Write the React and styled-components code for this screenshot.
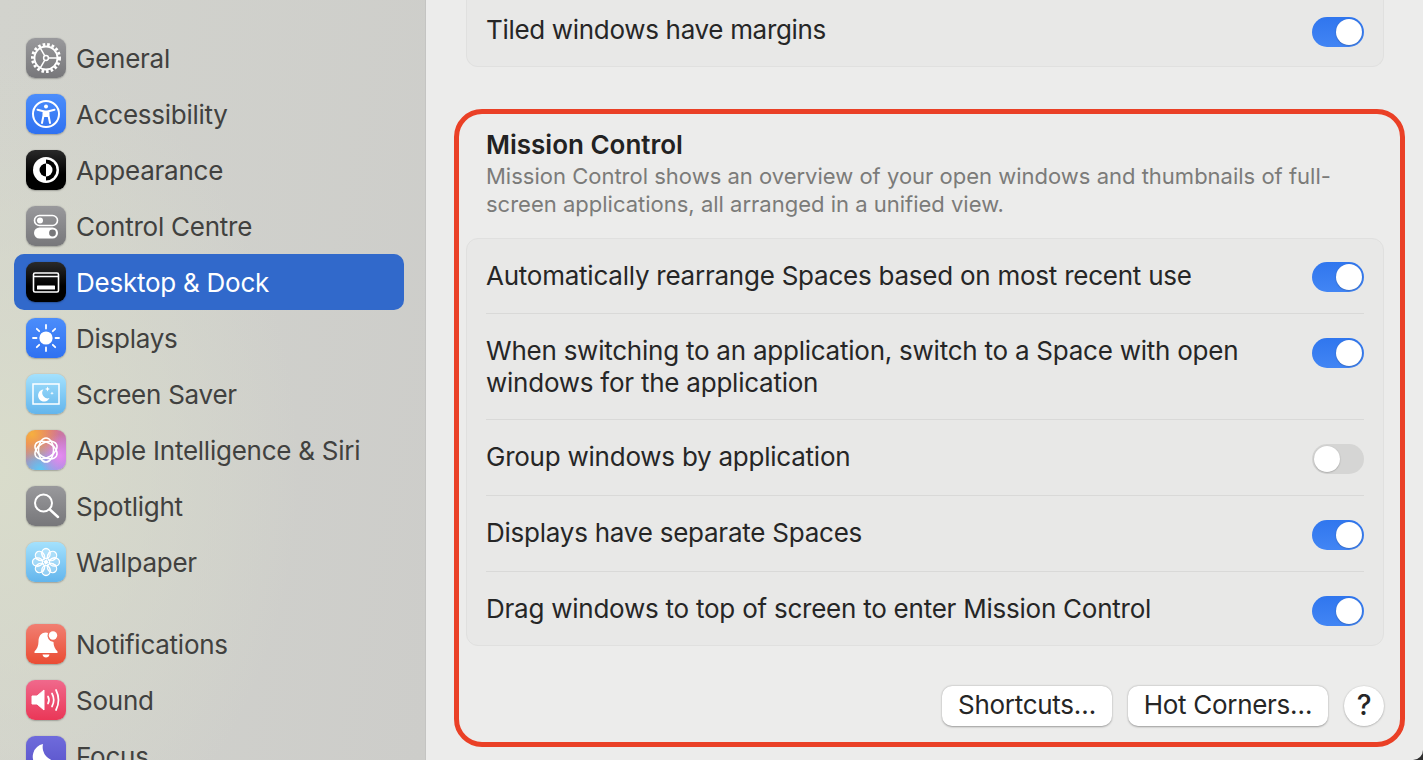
import React from "react";
import styled, { createGlobalStyle } from "styled-components";

const GlobalStyle = createGlobalStyle`
  html, body {
    margin: 0;
    padding: 0;
    height: 100%;
    overflow: hidden;
    background: #2e2e2e;
    font-family: "Inter", "Liberation Sans", sans-serif;
    -webkit-font-smoothing: antialiased;
  }
  #root { height: 100%; }
`;

/* PAGE */

const Window = styled.div`
  display: flex;
  width: 1423px;
  height: 760px;
  overflow: hidden;
  border-bottom-right-radius: 10px;
  background: #ececeb;
`;

const Sidebar = styled.nav`
  flex: 0 0 426px;
  box-sizing: border-box;
  height: 760px;
  padding: 30px 21px 0 14px;
  overflow: hidden;
  border-right: 1px solid #c4c4c2;
  background:
    radial-gradient(ellipse 300px 420px at 0px 470px, #d9dccb 0%, rgba(217, 220, 203, 0) 100%),
    linear-gradient(100deg, #d2d3cd 0%, #cdcdca 100%);
`;

const NavGroup = styled.div`
  display: flex;
  flex-direction: column;
  margin-bottom: 26px;
`;

const NavRow = styled.div`
  display: flex;
  align-items: center;
  flex: 0 0 56px;
  height: 56px;
  padding-left: 12px;
  border-radius: 10px;
  gap: 10px;
  font-size: 26px;
  letter-spacing: -0.25px;
  color: ${(p) => (p.$active ? "#ffffff" : "#41413f")};
  background: ${(p) => (p.$active ? "#3169cb" : "transparent")};
`;

const Tile = styled.span`
  display: block;
  width: 40px;
  height: 40px;
  flex: 0 0 40px;
  border-radius: 9px;
  overflow: hidden;
  background: ${(p) => p.$bg};
  box-shadow: 0 0.5px 1.5px rgba(0, 0, 0, 0.25);
  svg { display: block; width: 40px; height: 40px; }
`;

const Content = styled.main`
  flex: 1;
  display: flex;
  flex-direction: column;
  box-sizing: border-box;
  padding: 0 18px 0 28px;
`;

const Label = styled.span`
  max-width: 770px;
  margin-bottom: 1px;
  font-size: 26px;
  line-height: 32px;
  letter-spacing: -0.24px;
  color: #262626;
`;

const TopCard = styled.div`
  display: flex;
  align-items: center;
  justify-content: space-between;
  box-sizing: border-box;
  height: 67px;
  margin: 0 21px 42px 12px;
  padding: 0 19px 4px 19px;
  background: #e8e8e7;
  border: 1px solid #e0e0df;
  border-top: 0;
  border-radius: 0 0 12px 12px;
  ${Label} {
    margin-bottom: 3px;
    letter-spacing: -0.32px;
  }
`;

const Highlight = styled.section`
  display: flex;
  flex-direction: column;
  box-sizing: border-box;
  height: 638px;
  padding: 16px 16px 0 7px;
  border: 5px solid #ea4026;
  border-radius: 28px;
`;

const Heading = styled.div`
  padding-left: 20px;
`;

const Title = styled.h2`
  margin: 0 0 2px;
  font-size: 26px;
  line-height: 30px;
  font-weight: 600;
  color: #222222;
`;

const Description = styled.p`
  margin: 0;
  font-size: 22px;
  line-height: 28px;
  color: #7b7b79;
`;

const Card = styled.div`
  display: flex;
  flex-direction: column;
  box-sizing: border-box;
  height: 408px;
  margin-top: 20px;
  padding: 0 19px;
  background: #e8e8e7;
  border: 1px solid #e0e0df;
  border-radius: 12px;
`;

const Row = styled.div`
  display: flex;
  flex: 0 0 auto;
  justify-content: space-between;
  align-items: ${(p) => (p.$tall ? "flex-start" : "center")};
  box-sizing: border-box;
  height: ${(p) => p.$height}px;
  padding-top: ${(p) => (p.$tall ? "21px" : "0")};
  border-bottom: ${(p) => (p.$last ? "0" : "1px solid #d9d9d8")};
`;

const Toggle = styled.span`
  position: relative;
  display: block;
  flex: 0 0 52px;
  width: 52px;
  height: 30px;
  margin-top: ${(p) => (p.$raised ? "3px" : "2px")};
  border-radius: 15px;
  background: ${(p) => (p.$on ? "linear-gradient(180deg, #3076ee 0%, #4285f4 100%)" : "#d5d5d4")};
  &::after {
    content: "";
    position: absolute;
    top: 2px;
    left: ${(p) => (p.$on ? "24px" : "2px")};
    width: 26px;
    height: 26px;
    border-radius: 50%;
    background: #ffffff;
    box-shadow: 0 0.5px 1.5px rgba(0, 0, 0, 0.3);
  }
`;

const Footer = styled.div`
  display: flex;
  justify-content: flex-end;
  gap: 16px;
  margin-top: 40px;
`;

const Button = styled.button`
  box-sizing: border-box;
  height: 40px;
  width: ${(p) => p.$width}px;
  padding: 0 0 3px;
  border: 0;
  border-radius: 10px;
  background: #ffffff;
  box-shadow: 0 0.5px 2px rgba(0, 0, 0, 0.35);
  font-family: inherit;
  font-size: 26px;
  letter-spacing: -0.3px;
  color: #262626;
`;

const HelpButton = styled(Button)`
  border-radius: 50%;
  font-size: 28px;
  font-weight: 500;
`;

/* ICONS */

const W = { stroke: "#fff", fill: "none" };

const GeneralIcon = () => (
  <svg viewBox="0 0 40 40">
    <circle cx="20" cy="20" r="13.5" {...W} strokeWidth="3" strokeDasharray="2.6 2" />
    <circle cx="20" cy="20" r="11.5" {...W} strokeWidth="1.8" />
    <circle cx="20" cy="20" r="2.4" {...W} strokeWidth="1.5" />
    <path d="M22.4 20H31M18.8 17.9L14.6 10.6M18.8 22.1L14.6 29.4" {...W} strokeWidth="1.5" />
  </svg>
);

const AccessibilityIcon = () => (
  <svg viewBox="0 0 40 40">
    <circle cx="20" cy="20" r="13" {...W} strokeWidth="2" />
    <circle cx="20" cy="12.5" r="2" fill="#fff" />
    <path d="M11.5 15.8L17.5 17.2V21.5L16 29M28.5 15.8L22.5 17.2V21.5L24 29M18 22H22" {...W} strokeWidth="2" strokeLinecap="round" strokeLinejoin="round" />
    <rect x="17.5" y="16.5" width="5" height="6" fill="#fff" />
  </svg>
);

const AppearanceIcon = () => (
  <svg viewBox="0 0 40 40">
    <circle cx="20" cy="20" r="13" fill="#fff" />
    <path d="M20 9.5A10.5 10.5 0 0 1 20 30.5Z" fill="#000" />
    <path d="M20 13.5A6.5 6.5 0 0 0 20 26.5Z" fill="#000" />
    <path d="M20 13.5A6.5 6.5 0 0 1 20 26.5Z" fill="#fff" />
  </svg>
);

const ControlCentreIcon = () => (
  <svg viewBox="0 0 40 40">
    <rect x="8.5" y="9.5" width="23" height="10" rx="5" {...W} strokeWidth="1.6" />
    <circle cx="14" cy="14.5" r="3" fill="#fff" />
    <rect x="8" y="21.5" width="24" height="11" rx="5.5" fill="#fff" />
    <circle cx="26.5" cy="27" r="3.4" fill="#77777a" />
  </svg>
);

const DesktopIcon = () => (
  <svg viewBox="0 0 40 40">
    <rect x="7.5" y="11" width="25" height="19" rx="1.5" {...W} strokeWidth="1.6" />
    <path d="M7.5 14.5H32.5" {...W} strokeWidth="1.4" />
    <rect x="11" y="23.5" width="18" height="4" rx="0.6" fill="#fff" />
  </svg>
);

const DisplaysIcon = () => (
  <svg viewBox="0 0 40 40">
    <circle cx="20" cy="20" r="6.6" fill="#fff" />
    <path d="M20 7V10.5M20 29.5V33M7 20H10.5M29.5 20H33M10.8 10.8L13.2 13.2M26.8 26.8L29.2 29.2M10.8 29.2L13.2 26.8M26.8 13.2L29.2 10.8" {...W} strokeWidth="1.8" strokeLinecap="round" />
  </svg>
);

const ScreenSaverIcon = () => (
  <svg viewBox="0 0 40 40">
    <rect x="7" y="10" width="26" height="20" {...W} strokeWidth="1.5" />
    <path d="M17.5 15.5A6 6 0 1 0 23.5 24A5.4 5.4 0 0 1 17.5 15.5Z" fill="#fff" />
    <path d="M21.5 12.5L22.2 14.3L24 15L22.2 15.7L21.5 17.5L20.8 15.7L19 15L20.8 14.3ZM26 17.5L26.5 18.8L27.8 19.3L26.5 19.8L26 21L25.5 19.8L24.2 19.3L25.5 18.8Z" fill="#fff" />
  </svg>
);

const SiriIcon = () => (
  <svg viewBox="0 0 40 40">
    {[0, 60, 120].map((a) => (
      <ellipse key={a} cx="20" cy="20" rx="7.5" ry="12" {...W} strokeWidth="1.5" transform={`rotate(${a} 20 20)`} />
    ))}
  </svg>
);

const SpotlightIcon = () => (
  <svg viewBox="0 0 40 40">
    <circle cx="17.5" cy="17" r="8.5" {...W} strokeWidth="2" />
    <path d="M23.8 23.5L32 31" {...W} strokeWidth="2.4" strokeLinecap="round" />
  </svg>
);

const WallpaperIcon = () => (
  <svg viewBox="0 0 40 40">
    {[0, 45, 90, 135, 180, 225, 270, 315].map((a) => (
      <g key={a} transform={`rotate(${a} 20 20)`}>
        <ellipse cx="20" cy="11.5" rx="4.2" ry="5" fill="rgba(255,255,255,0.25)" stroke="#fff" strokeWidth="1.3" />
        <path d="M20 20L23 10" {...W} strokeWidth="0.8" />
      </g>
    ))}
    <circle cx="20" cy="20" r="2" fill="#fff" />
  </svg>
);

const NotificationsIcon = () => (
  <svg viewBox="0 0 40 40">
    <path d="M20 8.5C14.5 8.5 12.5 13 12.5 17.5C12.5 22 11 25 8.5 27.5V29H31.5V27.5C29 25 27.5 22 27.5 18A6.5 6.5 0 0 1 22 9Z" fill="#fff" />
    <path d="M16.5 30.5H23.5C23.2 32.5 21.8 33.5 20 33.5C18.2 33.5 16.8 32.5 16.5 30.5Z" fill="#fff" />
    <circle cx="27" cy="11.5" r="4.2" fill="#fff" />
  </svg>
);

const SoundIcon = () => (
  <svg viewBox="0 0 40 40">
    <path d="M6 16H11L18 10V30L11 24H6Z" fill="#fff" strokeLinejoin="round" stroke="#fff" strokeWidth="1" />
    <path d="M22 16.5Q24 20 22 23.5M26 13.5Q29.5 20 26 26.5M30 10Q35 20 30 30" {...W} strokeWidth="1.7" strokeLinecap="round" />
  </svg>
);

const FocusIcon = () => (
  <svg viewBox="0 0 40 40">
    <path d="M17 8A13 13 0 1 0 32 25A14 14 0 0 1 17 8Z" fill="#fff" />
  </svg>
);

const grey = "linear-gradient(180deg, #99999c 0%, #77777a 100%)";
const blue = "linear-gradient(180deg, #4b8dfb 0%, #2f71f1 100%)";
const sky = "linear-gradient(180deg, #a4e1fd 0%, #63b5ec 100%)";
const black = "linear-gradient(180deg, #2a2a2a 0%, #000000 60%)";

const navTop = [
  { name: "General", bg: grey, Icon: GeneralIcon },
  { name: "Accessibility", bg: blue, Icon: AccessibilityIcon },
  { name: "Appearance", bg: black, Icon: AppearanceIcon },
  { name: "Control Centre", bg: grey, Icon: ControlCentreIcon },
  { name: "Desktop & Dock", bg: black, Icon: DesktopIcon, active: true },
  { name: "Displays", bg: blue, Icon: DisplaysIcon },
  { name: "Screen Saver", bg: sky, Icon: ScreenSaverIcon },
  {
    name: "Apple Intelligence & Siri",
    bg: "radial-gradient(circle at 15% 10%, #f6b03f 0%, rgba(246,176,63,0) 55%), radial-gradient(circle at 85% 65%, #e58af0 0%, rgba(229,138,240,0) 50%), radial-gradient(circle at 35% 100%, #5cc8f5 0%, rgba(92,200,245,0) 60%), linear-gradient(135deg, #ef6a5e, #a583e8)",
    Icon: SiriIcon,
  },
  { name: "Spotlight", bg: grey, Icon: SpotlightIcon },
  { name: "Wallpaper", bg: sky, Icon: WallpaperIcon },
];

const navBottom = [
  { name: "Notifications", bg: "linear-gradient(180deg, #f17f72 0%, #ea4c33 100%)", Icon: NotificationsIcon },
  { name: "Sound", bg: "linear-gradient(180deg, #f0698c 0%, #ea3757 100%)", Icon: SoundIcon },
  { name: "Focus", bg: "linear-gradient(180deg, #6f6bdc 0%, #5650c8 100%)", Icon: FocusIcon },
];

const rows = [
  { text: "Automatically rearrange Spaces based on most recent use", height: 75, on: true },
  { text: "When switching to an application, switch to a Space with open windows for the application", height: 106, on: true, tall: true },
  { text: "Group windows by application", height: 76, on: false },
  { text: "Displays have separate Spaces", height: 76, on: true },
  { text: "Drag windows to top of screen to enter Mission Control", height: 75, on: true, last: true },
];

const NavItem = ({ item }) => (
  <NavRow $active={item.active}>
    <Tile $bg={item.bg}>
      <item.Icon />
    </Tile>
    {item.name}
  </NavRow>
);

export default function App() {
  return (
    <Window>
      <GlobalStyle />
      <Sidebar>
        <NavGroup>
          {navTop.map((item) => (
            <NavItem key={item.name} item={item} />
          ))}
        </NavGroup>
        <NavGroup>
          {navBottom.map((item) => (
            <NavItem key={item.name} item={item} />
          ))}
        </NavGroup>
      </Sidebar>
      <Content>
        <TopCard>
          <Label>Tiled windows have margins</Label>
          <Toggle $on />
        </TopCard>
        <Highlight>
          <Heading>
            <Title>Mission Control</Title>
            <Description>
              Mission Control shows an overview of your open windows and thumbnails of full-
              <br />
              screen applications, all arranged in a unified view.
            </Description>
          </Heading>
          <Card>
            {rows.map((row) => (
              <Row key={row.text} $height={row.height} $tall={row.tall} $last={row.last}>
                <Label>{row.text}</Label>
                <Toggle $on={row.on} $raised={row.tall} />
              </Row>
            ))}
          </Card>
          <Footer>
            <Button $width={170}>Shortcuts…</Button>
            <Button $width={200}>Hot Corners…</Button>
            <HelpButton $width={40}>?</HelpButton>
          </Footer>
        </Highlight>
      </Content>
    </Window>
  );
}
